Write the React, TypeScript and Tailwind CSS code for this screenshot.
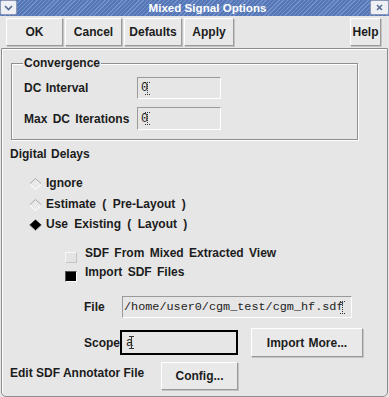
import React from "react";

function Btn({ w, children, className = "" }: { w: string; children: React.ReactNode; className?: string }) {
  return (
    <div
      className={`${w} ${className} flex items-center justify-center bg-[#e9e9e9] border border-t-[#ffffff] border-l-[#ffffff] border-b-[#9a9a9a] border-r-[#9a9a9a] shadow-[1px_1px_0_#c4c4c4] text-[12px] font-bold text-[#1c1c1c]`}
    >
      {children}
    </div>
  );
}

function Cursor({ dotted = true }: { dotted?: boolean }) {
  return (
    <svg width="5" height="13" viewBox="0 0 5 13" className="shrink-0">
      <line x1="0" y1="0.5" x2="5" y2="0.5" stroke="#333" strokeWidth="1" strokeDasharray={dotted ? "1 1" : undefined} />
      <line x1="2.5" y1="0" x2="2.5" y2="13" stroke="#333" strokeWidth="1" strokeDasharray={dotted ? "1 1" : undefined} />
      <line x1="0" y1="12.5" x2="5" y2="12.5" stroke="#333" strokeWidth="1" strokeDasharray={dotted ? "1 1" : undefined} />
    </svg>
  );
}

function Diamond({ on }: { on?: boolean }) {
  return (
    <svg width="13" height="12" viewBox="0 0 13 12" className="shrink-0">
      {on ? (
        <>
          <polygon points="6.5,0.5 12.5,6 6.5,11.5 0.5,6" fill="#000" />
          <polyline points="0.5,6 6.5,11.5 12.5,6" fill="none" stroke="#9a9a9a" strokeWidth="1" />
        </>
      ) : (
        <>
          <polygon points="6.5,0.5 12.5,6 6.5,11.5 0.5,6" fill="#e9e9e9" />
          <polyline points="0.5,6 6.5,0.5 12.5,6" fill="none" stroke="#a8a8a8" strokeWidth="1" />
          <polyline points="0.5,6 6.5,11.5 12.5,6" fill="none" stroke="#ffffff" strokeWidth="1" />
        </>
      )}
    </svg>
  );
}

export default function App() {
  return (
    <div className="w-[389px] h-[397px] bg-[#e6e6e6] overflow-hidden font-['Liberation_Sans',Arial,sans-serif] font-bold text-[12px] text-[#1c1c1c] leading-[14px]">
      {/* Title bar */}
      <div className="flex h-[16px] bg-[repeating-linear-gradient(135deg,#5676b6_0px,#5676b6_2px,#7292cd_2px,#7292cd_3px)]">
        <div className="w-[17px] h-[15px] bg-[#eef0f5] border border-[#8c98b3] rounded-[2px] flex items-center justify-center">
          <svg width="9" height="6" viewBox="0 0 9 6">
            <polyline points="1,1 4.5,4.5 8,1" fill="none" stroke="#55698f" strokeWidth="1.6" />
          </svg>
        </div>
        <div className="flex-1 flex items-center justify-center pl-[28px] text-white text-[11.6px] leading-[16px] font-bold">
          Mixed Signal Options
        </div>
        <div className="w-[19px] h-[15px] bg-[#eef0f5] border border-[#8c98b3] rounded-[2px] flex items-center justify-center">
          <svg width="7" height="7" viewBox="0 0 7 7">
            <line x1="1" y1="1" x2="6" y2="6" stroke="#55698f" strokeWidth="1.5" />
            <line x1="6" y1="1" x2="1" y2="6" stroke="#55698f" strokeWidth="1.5" />
          </svg>
        </div>
      </div>

      {/* Button row */}
      <div className="flex h-[32px] pt-[2px] pl-[6px] pr-[8px] gap-[2px] items-start">
        <Btn w="w-[57px] h-[28px]">OK</Btn>
        <Btn w="w-[57px] h-[28px]">Cancel</Btn>
        <Btn w="w-[58px] h-[28px]">Defaults</Btn>
        <Btn w="w-[50px] h-[28px]">Apply</Btn>
        <Btn w="w-[31px] h-[28px]" className="ml-auto">Help</Btn>
      </div>

      {/* Frame */}
      <div className="ml-[1px] w-[387px] h-[349px] border border-[#8c8c8c] rounded-b-[5px] shadow-[inset_1px_1px_0_#ffffff] flex flex-col">
        {/* Convergence group */}
        <div className="relative mt-[14px] ml-[9px] w-[347px] h-[77px] border border-[#8e8e8e] shadow-[inset_1px_1px_0_#ffffff,1px_1px_0_#ffffff] pt-[13px] pl-[12px] flex flex-col gap-[8px]">
          <div className="absolute -top-[8px] left-[11px] px-[1px] bg-[#e6e6e6]">Convergence</div>
          <div className="flex items-center h-[22px]">
            <div className="w-[113px] [word-spacing:1px]">DC Interval</div>
            <div className="w-[84px] h-[22px] border border-t-[#9a9a9a] border-l-[#9a9a9a] border-b-[#ffffff] border-r-[#ffffff] flex items-center pl-[3px] font-['Liberation_Mono',monospace] font-normal text-[12px]">
              <span>0</span>
              <span className="-ml-[3px]"><Cursor /></span>
            </div>
          </div>
          <div className="flex items-center h-[23px]">
            <div className="w-[113px] [word-spacing:2px]">Max DC Iterations</div>
            <div className="w-[84px] h-[23px] border border-t-[#9a9a9a] border-l-[#9a9a9a] border-b-[#ffffff] border-r-[#ffffff] flex items-center pl-[3px] font-['Liberation_Mono',monospace] font-normal text-[12px]">
              <span>0</span>
              <span className="-ml-[3px]"><Cursor /></span>
            </div>
          </div>
        </div>

        {/* Digital delays */}
        <div className="mt-[7px] ml-[8px] [word-spacing:1px]">Digital Delays</div>
        <div className="mt-[15px] pl-[27px] flex flex-col [word-spacing:3px]">
          <div className="h-[20.5px] flex items-start gap-[4px]">
            <span className="mt-[2px]"><Diamond /></span>
            <span>Ignore</span>
          </div>
          <div className="h-[20.5px] flex items-start gap-[4px]">
            <span className="mt-[2px]"><Diamond /></span>
            <span>Estimate ( Pre-Layout )</span>
          </div>
          <div className="h-[20.5px] flex items-start gap-[4px]">
            <span className="mt-[2px]"><Diamond on /></span>
            <span>Use Existing ( Layout )</span>
          </div>
        </div>

        {/* Checkboxes */}
        <div className="mt-[8px] pl-[63px] flex flex-col [word-spacing:2px]">
          <div className="h-[19px] flex items-start gap-[8px]">
            <div className="mt-[6px] w-[12px] h-[11px] bg-[#e4e4e4] border border-t-[#f6f6f6] border-l-[#f6f6f6] border-b-[#c4c4c4] border-r-[#c4c4c4]" />
            <span>SDF From Mixed Extracted View</span>
          </div>
          <div className="h-[19px] flex items-start gap-[8px]">
            <div className="mt-[6px] w-[12px] h-[11px] bg-[#000] border border-t-[#555] border-l-[#555] border-b-[#ffffff] border-r-[#ffffff]" />
            <span>Import SDF Files</span>
          </div>
        </div>

        {/* File row */}
        <div className="mt-[12.5px] pl-[82px] flex items-center h-[22px]">
          <div className="w-[38px]">File</div>
          <div className="w-[230px] h-[22px] border border-t-[#9a9a9a] border-l-[#9a9a9a] border-b-[#ffffff] border-r-[#ffffff] flex items-center pl-[1px] font-['Liberation_Mono',monospace] font-normal text-[11.8px] text-[#222]">
            <span>/home/user0/cgm_test/cgm_hf.sdf</span>
            <span className="-ml-[3px]"><Cursor /></span>
          </div>
        </div>

        {/* Scope row */}
        <div className="mt-[10px] pl-[82px] flex items-center h-[29px]">
          <div className="w-[36px]">Scope</div>
          <div className="w-[118px] h-[25px] border-2 border-black flex items-center pl-[4px] font-['Liberation_Mono',monospace] font-normal text-[12px]">
            <span>a</span>
            <span className="-ml-[4px]"><Cursor dotted={false} /></span>
          </div>
          <Btn w="ml-[13px] w-[112px] h-[29px] [word-spacing:1px]">Import More...</Btn>
        </div>

        {/* Edit SDF row */}
        <div className="mt-[5px] pl-[8px] flex items-start">
          <div className="w-[151px] mt-[3.5px]">Edit SDF Annotator File</div>
          <Btn w="w-[77px] h-[28px]">Config...</Btn>
        </div>
      </div>
    </div>
  );
}
